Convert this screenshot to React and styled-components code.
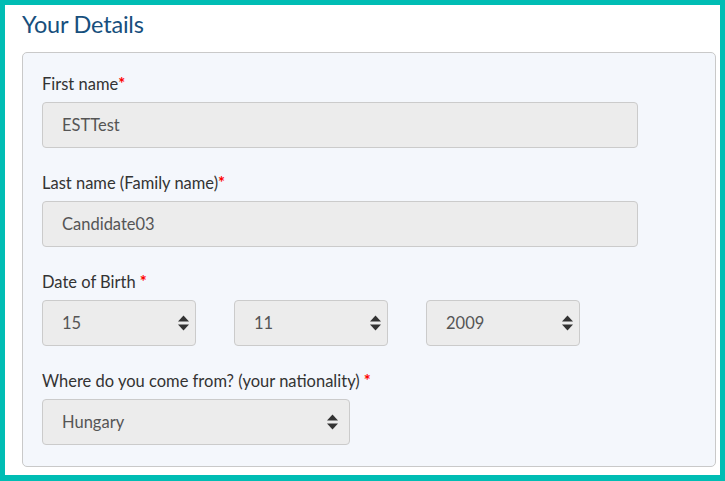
import styled, { createGlobalStyle } from "styled-components";

const GlobalStyle = createGlobalStyle`
  html, body {
    margin: 0;
    padding: 0;
    background: #ffffff;
  }
  body {
    font-family: Lato, "Liberation Sans", sans-serif;
    color: #333333;
  }
`;

// Outer teal frame around the whole shot
const Frame = styled.div`
  box-sizing: border-box;
  width: 725px;
  height: 481px;
  border-style: solid;
  border-color: #00bdb4;
  border-width: 5px 5px 6px 5px;
  background: #ffffff;
  padding: 0 0 0 17px;
  display: flex;
  flex-direction: column;
  overflow: hidden;
`;

const Heading = styled.h2`
  box-sizing: border-box;
  margin: 0;
  height: 47px;
  padding-bottom: 9px;
  display: flex;
  align-items: center;
  font-size: 23.5px;
  font-weight: 400;
  color: #174f7d;
  letter-spacing: -0.2px;
`;

const Panel = styled.div`
  box-sizing: border-box;
  width: 694px;
  height: 415px;
  background: #f4f7fc;
  border: 1px solid #c9c9c9;
  border-radius: 5px;
  padding: 20px 19px 0 19px;
`;

const Group = styled.div`
  margin-bottom: 24px;
`;

const Label = styled.label`
  display: block;
  font-size: 16.5px;
  line-height: 22px;
  color: #333333;
  margin-bottom: 7px;
`;

const Star = styled.span`
  color: #ff0000;
  font-weight: 700;
  margin-left: ${(p) => (p.$spaced ? "4px" : "0")};
`;

const TextInput = styled.input`
  box-sizing: border-box;
  display: block;
  width: 596px;
  height: 46px;
  padding: 0 19px;
  background: #ececec;
  border: 1px solid #cbcbcb;
  border-radius: 4px;
  font-family: Lato, "Liberation Sans", sans-serif;
  font-size: 16.5px;
  color: #555555;
  outline: none;
`;

const Row = styled.div`
  display: flex;
  gap: 38px;
`;

const SelectWrap = styled.div`
  position: relative;
  width: ${(p) => p.$width}px;
  height: 46px;
`;

const Select = styled.select`
  box-sizing: border-box;
  width: 100%;
  height: 100%;
  appearance: none;
  -webkit-appearance: none;
  padding: 0 19px;
  background: #ececec;
  border: 1px solid #cbcbcb;
  border-radius: 4px;
  font-family: Lato, "Liberation Sans", sans-serif;
  font-size: 16.5px;
  color: #555555;
  outline: none;
`;

const Arrows = styled.svg`
  position: absolute;
  right: ${(p) => p.$right}px;
  top: 50%;
  margin-top: -8px;
  pointer-events: none;
`;

function UpDown({ right }) {
  return (
    <Arrows $right={right} width="11" height="16" viewBox="0 0 11 16">
      <polygon points="0,6.5 5.5,0.5 11,6.5" fill="#333" />
      <polygon points="0,9.5 11,9.5 5.5,15.5" fill="#333" />
    </Arrows>
  );
}

function Dropdown({ width, value, arrowRight = 7 }) {
  return (
    <SelectWrap $width={width}>
      <Select value={value} onChange={() => {}}>
        <option value={value}>{value}</option>
      </Select>
      <UpDown right={arrowRight} />
    </SelectWrap>
  );
}

export default function App() {
  return (
    <>
      <GlobalStyle />
      <Frame>
        <Heading>Your Details</Heading>
        <Panel>
          <Group>
            <Label>
              First name<Star>*</Star>
            </Label>
            <TextInput readOnly value="ESTTest" />
          </Group>
          <Group>
            <Label>
              Last name (Family name)<Star>*</Star>
            </Label>
            <TextInput readOnly value="Candidate03" />
          </Group>
          <Group>
            <Label>
              Date of Birth<Star $spaced>*</Star>
            </Label>
            <Row>
              <Dropdown width={154} value="15" />
              <Dropdown width={154} value="11" />
              <Dropdown width={154} value="2009" />
            </Row>
          </Group>
          <Group>
            <Label>
              Where do you come from? (your nationality)<Star $spaced>*</Star>
            </Label>
            <Dropdown width={308} value="Hungary" arrowRight={12} />
          </Group>
        </Panel>
      </Frame>
    </>
  );
}
